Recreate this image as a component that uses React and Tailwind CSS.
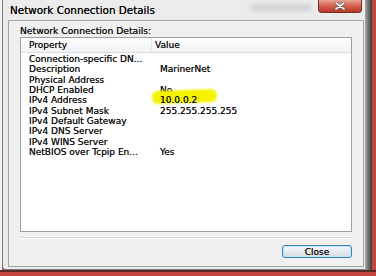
import React from 'react'

const rows = [
  ['Connection-specific DN...', ''],
  ['Description', 'MarinerNet'],
  ['Physical Address', ''],
  ['DHCP Enabled', 'No'],
  ['IPv4 Address', '10.0.0.2', true],
  ['IPv4 Subnet Mask', '255.255.255.255'],
  ['IPv4 Default Gateway', ''],
  ['IPv4 DNS Server', ''],
  ['IPv4 WINS Server', ''],
  ['NetBIOS over Tcpip En...', 'Yes'],
]

function CloseX() {
  return (
    <div className="mr-[3px] w-[44px] h-[13px] rounded-b-[4px] border border-t-0 border-[#7d2b22] bg-gradient-to-b from-[#eaa494] via-[#d4604d] to-[#b8382a] flex items-center justify-center">
      <svg width="12" height="8" viewBox="0 0 12 8">
        <path d="M2 1 L10 7 M10 1 L2 7" stroke="#4a4a4a" strokeWidth="3" strokeLinecap="round" />
        <path d="M2 1 L10 7 M10 1 L2 7" stroke="#ffffff" strokeWidth="1.6" strokeLinecap="round" />
      </svg>
    </div>
  )
}

export default function App() {
  return (
    <div
      className="w-[376px] h-[276px] bg-[#c4463d] flex flex-col overflow-hidden text-[#111] [text-shadow:0_0_0.4px_#333]"
      style={{ fontFamily: '"DejaVu Sans", sans-serif' }}
    >
      <div className="flex h-[270px]">
        <div className="w-[2px] bg-[#f4f4f4]" />
        <div className="w-[363px] h-full bg-[#ececec] border-l border-b border-[#7a7a7a] rounded-bl-[4px] flex flex-col">
          {/* title bar */}
          <div className="h-[20px] flex items-start">
            <div className="pl-[7px] pt-[4px] text-[10.4px] leading-[12px] text-black">Network Connection Details</div>
            <div className="flex-1 flex pt-[4px]">
              <div className="ml-[96px] w-[60px] h-[7px] bg-[#d2d2d2] blur-[2px]" />
            </div>
            <CloseX />
          </div>

          {/* client area */}
          <div className="flex-1 ml-[5px] mr-[1px] mb-[2px] border border-[#a4a4a4] bg-[#f0f0f0] flex flex-col px-[11px]">
            <div className="h-[16px] pt-[4px] text-[9.2px] leading-[11px]">Network Connection Details:</div>
            <div className="h-[195px] border border-[#9a9fa8] bg-white flex flex-col">
              <div className="h-[15px] flex bg-gradient-to-b from-white to-[#f1f2f4] border-b border-[#d8dbe0] text-[9px] leading-[14px]">
                <div className="w-[131px] pl-[8px] border-r border-[#e2e4e8]">Property</div>
                <div className="pl-[3px]">Value</div>
              </div>
              <div className="pt-[1px] flex flex-col text-[9px]">
                {rows.map(([k, v, hi]) => (
                  <div key={k} className="h-[10.33px] leading-[10px] flex">
                    <div className="w-[139px] pl-[8px] whitespace-nowrap">{k}</div>
                    <div className="relative whitespace-nowrap">
                      {hi && (
                        <span className="absolute left-[-8px] top-[-5px] w-[65px] h-[13px] bg-[#f5f300] rounded-[6px] blur-[1px] -rotate-2" />
                      )}
                      <span className="relative">{v}</span>
                    </div>
                  </div>
                ))}
              </div>
            </div>
            <div className="mt-[5px] h-[2px] border-t border-[#d5d5d5] border-b border-b-white" />
            <div className="mt-[6px] flex justify-end">
              <div className="w-[70px] h-[13px] rounded-[3px] border border-[#3c83b8] bg-gradient-to-b from-[#f4f8fb] to-[#d6dde3] shadow-[inset_0_0_0_1px_#bfe3f7] flex items-center justify-center text-[9px] leading-[10px]">
                Close
              </div>
            </div>
          </div>
        </div>
        <div className="w-[7px] bg-gradient-to-r from-[#a8a8a8] to-[#3c3c3c]" />
      </div>
      <div className="h-[2px] bg-[#5a2a26]" />
    </div>
  )
}
